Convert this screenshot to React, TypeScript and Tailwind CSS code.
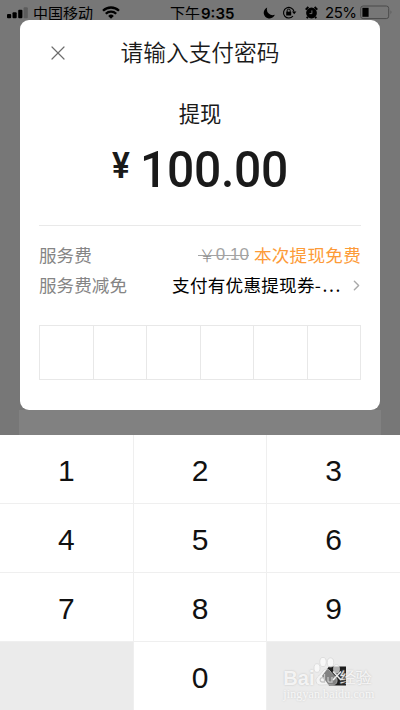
import { ChevronRight, X } from "lucide-react";

const KEYS = ["1", "2", "3", "4", "5", "6", "7", "8", "9"];

function StatusBar() {
  return (
    <div className="flex h-[20px] items-start pt-[3px] pl-[7px] pr-[7px] text-[15px] leading-[20px] text-black">
      <svg className="mt-[4px] shrink-0" width="21" height="12" viewBox="0 0 21 12">
        <rect x="0" y="7" width="4.2" height="4.2" rx="1" />
        <rect x="5.5" y="5.2" width="4.2" height="6" rx="1" />
        <rect x="11.2" y="2.8" width="4.2" height="8.4" rx="1" />
        <rect x="16.6" y="0.2" width="4.2" height="11" rx="1" fill="#5c5c5c" />
      </svg>
      <span className="ml-[5px] w-[60px] whitespace-nowrap">中国移动</span>
      <svg className="ml-[9px] mt-[3px] shrink-0" width="18" height="13" viewBox="0 0 18 13" fill="none" stroke="#000" strokeWidth="2.3">
        <path d="M1 4.8a11.4 11.4 0 0 1 16 0" />
        <path d="M3.8 7.8a7.4 7.4 0 0 1 10.4 0" />
        <path d="M6.2 9.9a4 4 0 0 1 5.6 0L9 12.8z" fill="#000" stroke="none" />
      </svg>
      <span className="ml-[50px] w-[66px] whitespace-nowrap">
        下午<span className="ml-[1px] font-['Inter',sans-serif] text-[15px] font-semibold">9:35</span>
      </span>
      <svg className="ml-[27px] mt-[4px] shrink-0" width="12" height="12" viewBox="0 0 12 12">
        <path d="M4.2.5A5.7 5.7 0 1 0 11.8 7.7 5.8 5.8 0 0 1 4.2.5z" />
      </svg>
      <svg className="ml-[7px] mt-[3px] shrink-0" width="15" height="13" viewBox="0 0 15 13" fill="none" stroke="#000">
        <path d="M12 5.5A5.3 5.3 0 1 0 11 10" strokeWidth="1.1" />
        <path d="M10 5.5h4.4L12.2 8.2z" fill="#000" stroke="none" />
        <rect x="4.2" y="5.7" width="5" height="3.8" fill="#000" stroke="none" />
        <path d="M5.2 6V4.6a1.5 1.5 0 0 1 3 0V6" />
      </svg>
      <svg className="ml-[8px] mt-[3px] shrink-0" width="13" height="13" viewBox="0 0 13 13">
        <circle cx="6.5" cy="7" r="5.4" />
        <path d="M.7 3.7L3.4 1M12.3 3.7L9.6 1M2.8 10.8l-1 1.5M10.2 10.8l1 1.5" stroke="#000" strokeWidth="1.9" />
        <path d="M6.9 4.4v3.2H4.5" fill="none" stroke="#777" strokeWidth="0.9" />
      </svg>
      <span className="ml-[7px] w-[31px] whitespace-nowrap font-['Inter',sans-serif] text-[15px] tracking-[-0.5px]">25%</span>
      <svg className="ml-[4px] mt-[2px] shrink-0" width="33" height="15" viewBox="0 0 33 15">
        <rect x=".7" y="1" width="28" height="12.6" rx="2.4" fill="none" stroke="#4b4b4b" strokeWidth="1" />
        <rect x="2.4" y="2.8" width="6.2" height="9" />
        <path d="M30.7 5.2q1.6 2 0 4.3z" fill="#4b4b4b" />
      </svg>
    </div>
  );
}

function PasswordDialog() {
  return (
    <div className="mx-[20px] flex h-[390px] flex-col rounded-[9px] bg-white px-[19px] text-[#1a1a1a]">
      {/* Header */}
      <div className="grid h-[65px] grid-cols-[38px_1fr_38px] items-center">
        <X className="ml-[7px]" size={24} strokeWidth={1.2} color="#6d6d6d" />
        <h1 className="text-center text-[22.7px] font-[350]">请输入支付密码</h1>
      </div>

      {/* Amount */}
      <div className="mt-[12px] text-center text-[21.3px] leading-[32px]">提现</div>
      <div className="flex h-[97px] items-start justify-center border-b border-[#e9e9e9] pt-[12px] font-['Roboto',sans-serif]">
        <span className="mr-[7px] mt-[4px] w-[21px] origin-left scale-x-[.93] text-[36px] leading-[42px] font-semibold">¥</span>
        <span className="w-[149px] origin-left scale-x-[.95] text-[50.5px] leading-[58px] font-medium tracking-[-0.3px]">100.00</span>
      </div>

      {/* Fees */}
      <div className="mt-[14px] flex flex-col text-[17.6px] leading-[30px]">
        <div className="flex h-[30px] justify-between text-[#858585]">
          <span>服务费</span>
          <span className="flex gap-[5px]">
            <span className="relative flex">
              <span className="font-light text-[#8f8f8f]">￥</span>
              <span className="font-['Liberation_Sans',sans-serif] text-[17px] text-[#a3a3a3]">0.10</span>
              <span className="absolute inset-x-0 top-[15px] h-px bg-[#a3a3a3]" />
            </span>
            <span className="tracking-[0.25px] text-[#fd9b38]">本次提现免费</span>
          </span>
        </div>
        <div className="flex h-[30px] items-center">
          <span className="text-[#858585]">服务费减免</span>
          <span className="ml-auto whitespace-nowrap tracking-[0.25px] text-black">
            支付有优惠提现券<span className="tracking-[1.6px]">-...</span>
          </span>
          <ChevronRight className="ml-[6px] mr-[-4px]" size={17} strokeWidth={2} color="#aaa" />
        </div>
      </div>

      {/* Six-digit password */}
      <div className="mt-[25px] grid h-[55px] grid-cols-6 border-y border-l border-[#e8e8e8]">
        {KEYS.slice(0, 6).map((key) => (
          <div key={key} className="border-r border-[#e8e8e8]" />
        ))}
      </div>
    </div>
  );
}

function Watermark() {
  return (
    <div className="absolute left-[16px] top-[23px] h-[46px] w-[100px] text-left text-white/80">
      <div className="flex items-start text-[20px] leading-[26px] font-bold [text-shadow:0_0_2px_#bbb]">
        <span className="w-[57px] font-['Liberation_Sans',sans-serif]">Bai</span>
        <span className="text-[15.5px] font-medium">经验</span>
      </div>
      <div className="mt-[-3px] whitespace-nowrap font-['Liberation_Serif',serif] text-[12px] leading-[12px] tracking-[0.1px] [text-shadow:0_0_2px_#c4c4c4]">
        jingyan.baidu.com
      </div>
      <svg className="absolute left-[30px] top-[-10px]" width="28" height="32" viewBox="0 0 28 32" fill="#fff" fillOpacity=".65" stroke="#d2d2d2" strokeWidth=".6">
        <ellipse cx="4" cy="13" rx="3" ry="4.3" />
        <ellipse cx="10" cy="7" rx="3.2" ry="4.6" />
        <ellipse cx="17.5" cy="7.5" rx="3.2" ry="4.6" />
        <ellipse cx="23.5" cy="14" rx="3" ry="4.3" />
        <path d="M13.5 14c3 0 4.2 3 6.2 5.2 2.6 2.8 5.2 4 4.3 7.6-1.2 4.7-6.2 2.9-10.5 2.9s-9 1.8-10.3-2.9c-.9-3.6 1.7-4.8 4.2-7.6 2-2.2 3.1-5.2 6.1-5.2z" fillOpacity=".45" />
        <path d="M11.5 19v8H9a2.2 2.2 0 1 1 2.5-2.6M15 22v3.4q0 1.8 2 1.8h2V22" fill="none" stroke="#c6c6c6" strokeWidth="1.3" />
      </svg>
    </div>
  );
}

function Keypad() {
  return (
    <div className="grid h-[275px] grid-cols-3 grid-rows-4 gap-px bg-[#efefef] font-['Liberation_Sans',sans-serif] text-[30px] leading-none text-[#111]">
      {KEYS.map((key) => (
        <button key={key} className="bg-white pt-[4px]">
          {key}
        </button>
      ))}
      <div className="bg-[#ebebeb]" />
      <button className="bg-white pt-[4px]">0</button>
      <button className="relative bg-[#ebebeb]">
        <svg className="absolute left-[54px] top-[23px]" width="26" height="22" viewBox="0 0 26 22">
          <path d="M1 11l7-9.5h17v19H8z" fill="#1d1d1d" />
          <path d="M12 6.5l8 8.5M20 6.5L12 15" stroke="#ebebeb" strokeWidth="1.6" />
        </svg>
        <Watermark />
      </button>
    </div>
  );
}

export default function App() {
  return (
    <div className="flex h-[710px] w-[400px] flex-col overflow-hidden bg-[#777777] font-['Noto_Sans_CJK_SC',sans-serif]">
      <StatusBar />
      <PasswordDialog />
      <div className="mx-[19px] h-[25px] bg-[#818181]" />
      <Keypad />
    </div>
  );
}
